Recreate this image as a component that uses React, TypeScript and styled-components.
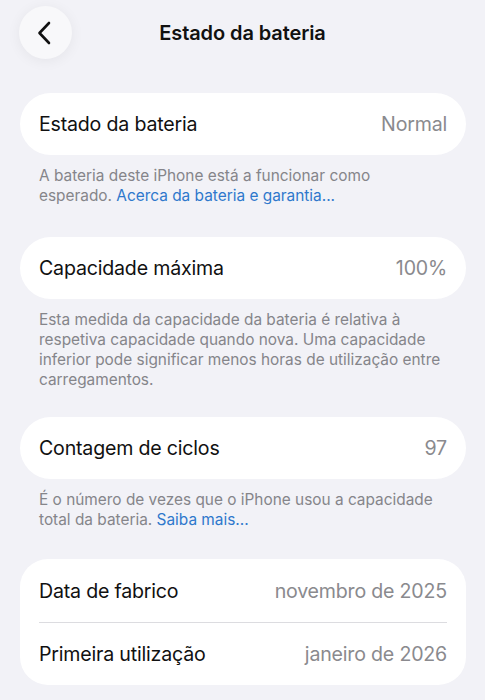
import styled, { createGlobalStyle } from "styled-components";

const GlobalStyle = createGlobalStyle`
  html, body {
    margin: 0;
    padding: 0;
    background: #f2f2f7;
  }
  body {
    font-family: Inter, "Noto Sans", "Liberation Sans", sans-serif;
    -webkit-font-smoothing: antialiased;
  }
  * {
    box-sizing: border-box;
  }
`;

const Page = styled.div`
  width: 485px;
  height: 700px;
  overflow: hidden;
  background: #f2f2f7;
  display: flex;
  flex-direction: column;
  & > * {
    flex-shrink: 0;
  }
`;

const NavBar = styled.div`
  position: relative;
  height: 66px;
  display: flex;
  align-items: center;
  justify-content: center;
  padding: 0 19px;
`;

const BackButton = styled.button`
  position: absolute;
  left: 19px;
  top: 6px;
  width: 53px;
  height: 53px;
  border-radius: 50%;
  border: none;
  background: #f8f8fa;
  box-shadow: 0 2px 14px rgba(0, 0, 0, 0.06);
  display: flex;
  align-items: center;
  justify-content: center;
  padding: 0 4px 0 0;
`;

const Title = styled.h1`
  margin: 0;
  font-size: 20px;
  font-weight: 600;
  color: #111;
  letter-spacing: -0.1px;
`;

const Content = styled.div`
  display: flex;
  flex-direction: column;
  padding: 27px 19px 0 20px;
  & > * {
    flex-shrink: 0;
  }
`;

const Card = styled.div<{ $radius?: number }>`
  background: #ffffff;
  border-radius: ${(p) => p.$radius ?? 31}px;
  padding: 0 19px 0 19px;
  display: flex;
  flex-direction: column;
`;

const Row = styled.div<{ $divider?: boolean }>`
  height: ${(p) => (p.$divider ? 64 : 62)}px;
  display: flex;
  align-items: center;
  justify-content: space-between;
  border-bottom: ${(p) => (p.$divider ? "1px solid #dcdce0" : "none")};
  font-size: 19.6px;
`;

const Label = styled.span`
  color: #111;
  letter-spacing: -0.2px;
`;

const Value = styled.span`
  color: #8a8a8e;
  letter-spacing: -0.2px;
`;

const Footer = styled.p<{ $lines: number; $gap: number }>`
  margin: 0;
  padding: 11px 19px 0 19px;
  font-size: 15.4px;
  line-height: 20px;
  color: #85858a;
  height: ${(p) => p.$lines * 20 + 11}px;
  margin-bottom: ${(p) => p.$gap}px;
`;

const Link = styled.span`
  color: #2e78cc;
`;

function Chevron() {
  return (
    <svg width="14" height="24" viewBox="0 0 14 24" fill="none">
      <path
        d="M12 2 L2.5 12 L12 22"
        stroke="#111"
        strokeWidth="2.6"
        strokeLinecap="round"
        strokeLinejoin="round"
      />
    </svg>
  );
}

export default function App() {
  return (
    <>
      <GlobalStyle />
      <Page>
        <NavBar>
          <BackButton aria-label="Voltar">
            <Chevron />
          </BackButton>
          <Title>Estado da bateria</Title>
        </NavBar>
        <Content>
          <Card>
            <Row>
              <Label>Estado da bateria</Label>
              <Value>Normal</Value>
            </Row>
          </Card>
          <Footer $lines={2} $gap={31}>
            A bateria deste iPhone está a funcionar como
            <br />
            esperado. <Link>Acerca da bateria e garantia...</Link>
          </Footer>

          <Card>
            <Row>
              <Label>Capacidade máxima</Label>
              <Value>100%</Value>
            </Row>
          </Card>
          <Footer $lines={4} $gap={27}>
            Esta medida da capacidade da bateria é relativa à
            <br />
            respetiva capacidade quando nova. Uma capacidade
            <br />
            inferior pode significar menos horas de utilização entre
            <br />
            carregamentos.
          </Footer>

          <Card>
            <Row>
              <Label>Contagem de ciclos</Label>
              <Value>97</Value>
            </Row>
          </Card>
          <Footer $lines={2} $gap={29}>
            É o número de vezes que o iPhone usou a capacidade
            <br />
            total da bateria. <Link>Saiba mais...</Link>
          </Footer>

          <Card $radius={28}>
            <Row $divider>
              <Label>Data de fabrico</Label>
              <Value>novembro de 2025</Value>
            </Row>
            <Row>
              <Label>Primeira utilização</Label>
              <Value>janeiro de 2026</Value>
            </Row>
          </Card>
        </Content>
      </Page>
    </>
  );
}
